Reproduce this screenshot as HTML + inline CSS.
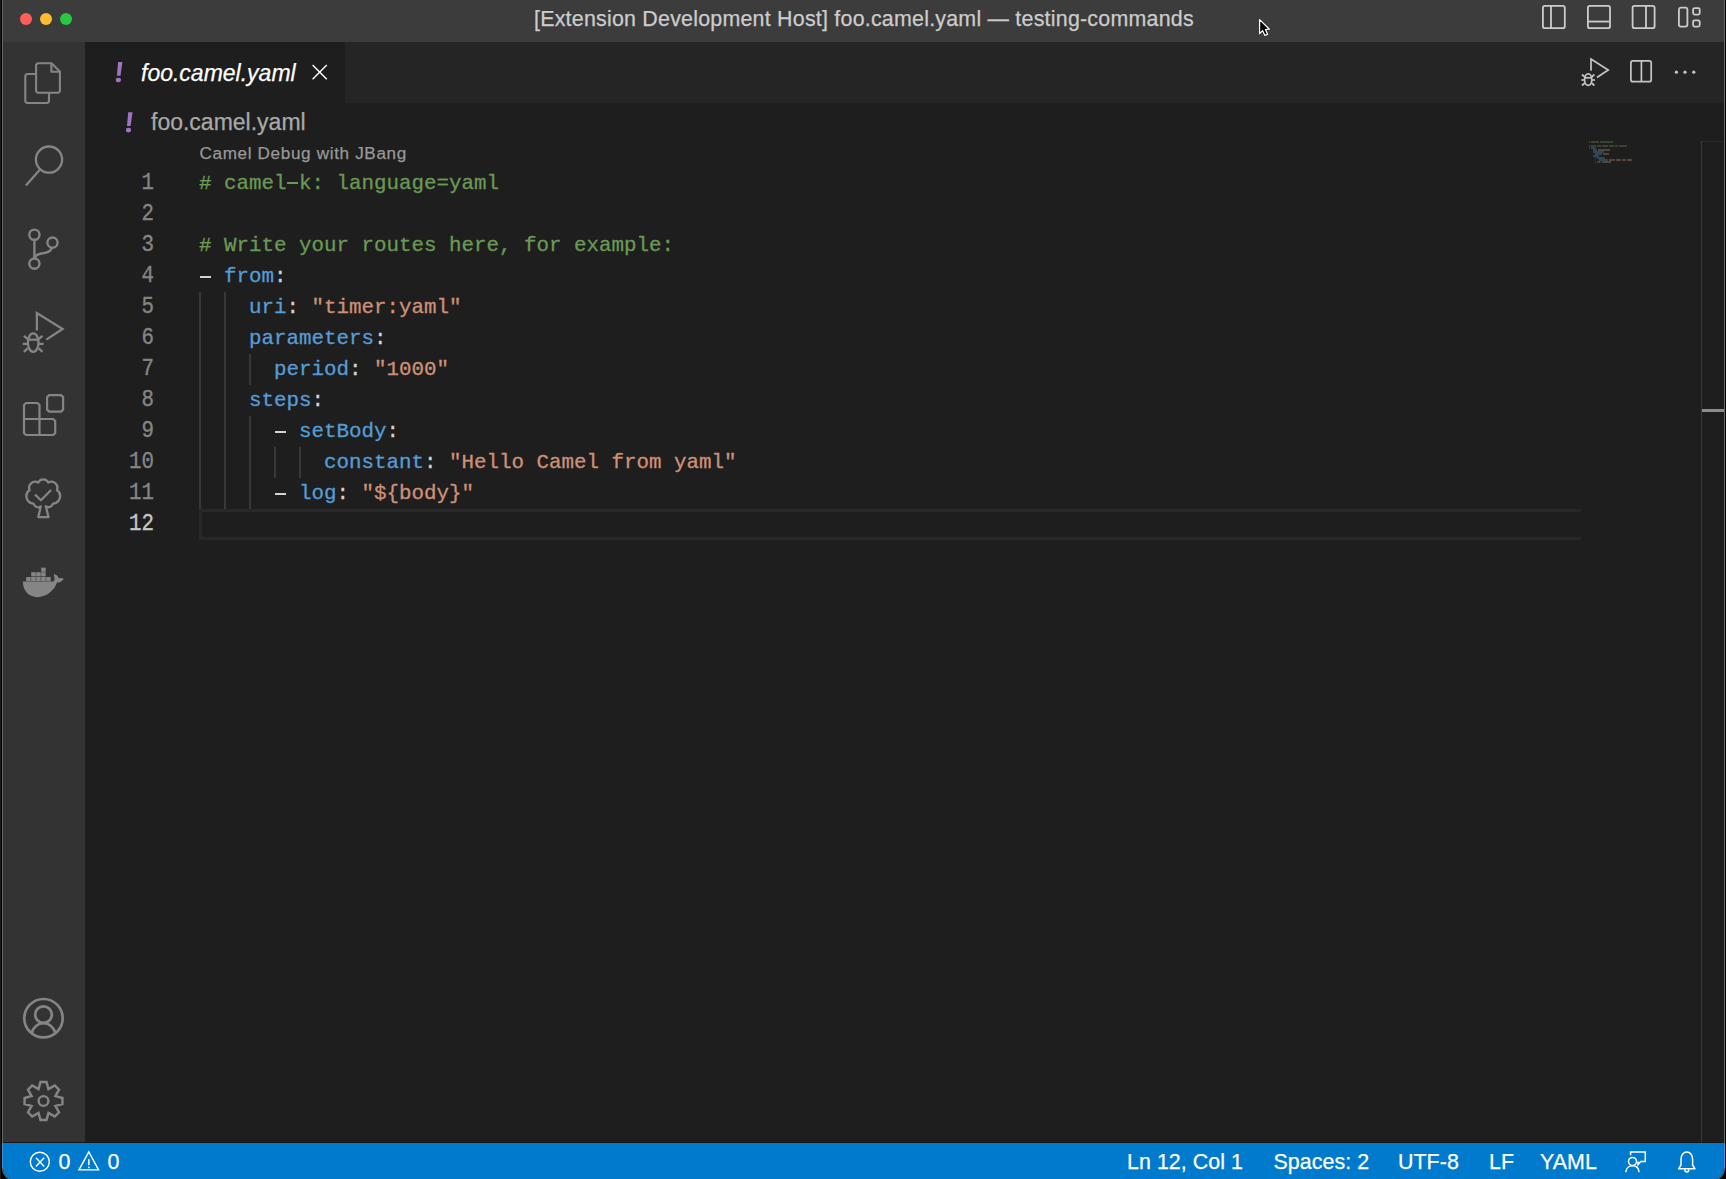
<!DOCTYPE html><html><head><meta charset="utf-8"><style>
html,body{margin:0;padding:0;width:1726px;height:1179px;overflow:hidden;background:#000;}
body{font-family:"Liberation Sans", sans-serif;position:relative;}
.abs{position:absolute;}
#brd{position:absolute;left:2px;top:0;width:1723px;height:1181px;border-radius:0 0 13px 13px;background:#666;}
#win{position:absolute;left:3px;top:0;width:1721px;height:1180px;border-radius:0 0 12px 12px;overflow:hidden;background:#1e1e1e;}
.code{position:absolute;left:199px;-webkit-text-stroke:0.3px currentColor;font-family:"Liberation Mono", monospace;font-size:20.83px;line-height:31px;white-space:pre;color:#d4d4d4;}
.ln{position:absolute;left:100px;width:54px;text-align:right;-webkit-text-stroke:0.3px currentColor;transform:scaleY(1.17);transform-origin:0 21px;font-family:"Liberation Mono", monospace;font-size:20.83px;line-height:31px;color:#858585;}
.c{color:#6a9955}.k{color:#569cd6}.s{color:#ce9178}.p{color:#d4d4d4}
.g{position:absolute;width:2px;background:#383838;}
.d{position:absolute;width:11px;height:2.4px;background:#d4d4d4;}
.mm{position:absolute;height:1.5px;}
</style></head><body>
<div class="abs" style="left:0;top:0;width:1px;height:1179px;background:#1a1a1a"></div>
<div id="brd"></div>
<div id="win">
<div class="abs" style="left:0;top:0;width:1721px;height:42px;background:#3c3c3c;"></div>
<div class="abs" style="left:0;top:42px;width:82px;height:1101px;background:#333333;"></div>
<div class="abs" style="left:82px;top:42px;width:1639px;height:61px;background:#252526;"></div>
<div class="abs" style="left:82px;top:42px;width:260px;height:61px;background:#1e1e1e;"></div>
<div class="abs" style="left:0;top:1143px;width:1721px;height:37px;background:#007acc;"></div>
</div>
<div style="position:absolute;left:534px;top:8.51px;font-size:21.4px;line-height:21.4px;color:#cccccc;letter-spacing:0.23px;font-style:normal;white-space:pre;-webkit-text-stroke:0.25px #cccccc;">[Extension Development Host] foo.camel.yaml — testing-commands</div>
<div class="abs" style="left:19.8px;top:12.8px;width:12.4px;height:12.4px;border-radius:50%;background:#ff5f57;"></div>
<div class="abs" style="left:39.8px;top:12.8px;width:12.4px;height:12.4px;border-radius:50%;background:#febc2e;"></div>
<div class="abs" style="left:59.8px;top:12.8px;width:12.4px;height:12.4px;border-radius:50%;background:#28c840;"></div>
<div style="position:absolute;left:141px;top:61.55px;font-size:23px;line-height:23px;color:#ffffff;letter-spacing:0px;font-style:italic;white-space:pre;-webkit-text-stroke:0.25px #ffffff;">foo.camel.yaml</div>
<div style="position:absolute;left:151px;top:111.45px;font-size:23px;line-height:23px;color:#a9a9a9;letter-spacing:0px;font-style:normal;white-space:pre;-webkit-text-stroke:0.25px #a9a9a9;">foo.camel.yaml</div>
<div style="position:absolute;left:199.5px;top:145.27px;font-size:17.1px;line-height:17.1px;color:#999999;letter-spacing:0.66px;font-style:normal;white-space:pre;-webkit-text-stroke:0.25px #999999;">Camel Debug with JBang</div>
<div class="ln" style="top:168px;color:#858585">1</div>
<div class="d" style="left:287.2px;top:181.5px;width:10.7px;height:2.1px;background:#6a9955"></div>
<div class="code" style="top:168px"><span class="c"># camel</span> <span class="c">k: language=yaml</span></div>
<div class="mm" style="left:1588.70px;top:141.0px;width:1.01px;background:#6a9955;opacity:.32"></div>
<div class="mm" style="left:1590.72px;top:141.0px;width:5.05px;background:#6a9955;opacity:.32"></div>
<div class="mm" style="left:1595.77px;top:141.0px;width:1.01px;background:#6a9955;opacity:.32"></div>
<div class="mm" style="left:1596.78px;top:141.0px;width:2.02px;background:#6a9955;opacity:.32"></div>
<div class="mm" style="left:1599.81px;top:141.0px;width:13.13px;background:#6a9955;opacity:.32"></div>
<div class="ln" style="top:199px;color:#858585">2</div>
<div class="ln" style="top:230px;color:#858585">3</div>
<div class="code" style="top:230px"><span class="c"># Write your routes here, for example:</span></div>
<div class="mm" style="left:1588.70px;top:145.0px;width:1.01px;background:#6a9955;opacity:.32"></div>
<div class="mm" style="left:1590.72px;top:145.0px;width:5.05px;background:#6a9955;opacity:.32"></div>
<div class="mm" style="left:1596.78px;top:145.0px;width:4.04px;background:#6a9955;opacity:.32"></div>
<div class="mm" style="left:1601.83px;top:145.0px;width:6.06px;background:#6a9955;opacity:.32"></div>
<div class="mm" style="left:1608.90px;top:145.0px;width:5.05px;background:#6a9955;opacity:.32"></div>
<div class="mm" style="left:1614.96px;top:145.0px;width:3.03px;background:#6a9955;opacity:.32"></div>
<div class="mm" style="left:1619.00px;top:145.0px;width:8.08px;background:#6a9955;opacity:.32"></div>
<div class="ln" style="top:261px;color:#858585">4</div>
<div class="d" style="left:199.8px;top:275.6px"></div>
<div class="code" style="top:261px">  <span class="k">from</span><span class="p">:</span></div>
<div class="mm" style="left:1588.70px;top:147.0px;width:1.01px;background:#d4d4d4;opacity:.15"></div>
<div class="mm" style="left:1590.72px;top:147.0px;width:4.04px;background:#569cd6;opacity:.32"></div>
<div class="mm" style="left:1594.76px;top:147.0px;width:1.01px;background:#d4d4d4;opacity:.15"></div>
<div class="ln" style="top:292px;color:#858585">5</div>
<div class="code" style="top:292px">    <span class="k">uri</span><span class="p">:</span> <span class="s">"timer:yaml"</span></div>
<div class="mm" style="left:1592.74px;top:149.0px;width:3.03px;background:#569cd6;opacity:.32"></div>
<div class="mm" style="left:1595.77px;top:149.0px;width:1.01px;background:#d4d4d4;opacity:.15"></div>
<div class="mm" style="left:1597.79px;top:149.0px;width:12.12px;background:#ce9178;opacity:.32"></div>
<div class="ln" style="top:323px;color:#858585">6</div>
<div class="code" style="top:323px">    <span class="k">parameters</span><span class="p">:</span></div>
<div class="mm" style="left:1592.74px;top:151.0px;width:10.10px;background:#569cd6;opacity:.32"></div>
<div class="mm" style="left:1602.84px;top:151.0px;width:1.01px;background:#d4d4d4;opacity:.15"></div>
<div class="ln" style="top:354px;color:#858585">7</div>
<div class="code" style="top:354px">      <span class="k">period</span><span class="p">:</span> <span class="s">"1000"</span></div>
<div class="mm" style="left:1594.76px;top:153.0px;width:6.06px;background:#569cd6;opacity:.32"></div>
<div class="mm" style="left:1600.82px;top:153.0px;width:1.01px;background:#d4d4d4;opacity:.15"></div>
<div class="mm" style="left:1602.84px;top:153.0px;width:6.06px;background:#ce9178;opacity:.32"></div>
<div class="ln" style="top:385px;color:#858585">8</div>
<div class="code" style="top:385px">    <span class="k">steps</span><span class="p">:</span></div>
<div class="mm" style="left:1592.74px;top:155.0px;width:5.05px;background:#569cd6;opacity:.32"></div>
<div class="mm" style="left:1597.79px;top:155.0px;width:1.01px;background:#d4d4d4;opacity:.15"></div>
<div class="ln" style="top:416px;color:#858585">9</div>
<div class="d" style="left:274.8px;top:430.6px"></div>
<div class="code" style="top:416px">        <span class="k">setBody</span><span class="p">:</span></div>
<div class="mm" style="left:1594.76px;top:157.0px;width:1.01px;background:#d4d4d4;opacity:.15"></div>
<div class="mm" style="left:1596.78px;top:157.0px;width:7.07px;background:#569cd6;opacity:.32"></div>
<div class="mm" style="left:1603.85px;top:157.0px;width:1.01px;background:#d4d4d4;opacity:.15"></div>
<div class="ln" style="top:447px;color:#858585">10</div>
<div class="code" style="top:447px">          <span class="k">constant</span><span class="p">:</span> <span class="s">"Hello Camel from yaml"</span></div>
<div class="mm" style="left:1598.80px;top:159.0px;width:8.08px;background:#569cd6;opacity:.32"></div>
<div class="mm" style="left:1606.88px;top:159.0px;width:1.01px;background:#d4d4d4;opacity:.15"></div>
<div class="mm" style="left:1608.90px;top:159.0px;width:6.06px;background:#ce9178;opacity:.32"></div>
<div class="mm" style="left:1615.97px;top:159.0px;width:5.05px;background:#ce9178;opacity:.32"></div>
<div class="mm" style="left:1622.03px;top:159.0px;width:4.04px;background:#ce9178;opacity:.32"></div>
<div class="mm" style="left:1627.08px;top:159.0px;width:5.05px;background:#ce9178;opacity:.32"></div>
<div class="ln" style="top:478px;color:#858585">11</div>
<div class="d" style="left:274.8px;top:492.6px"></div>
<div class="code" style="top:478px">        <span class="k">log</span><span class="p">:</span> <span class="s">"${body}"</span></div>
<div class="mm" style="left:1594.76px;top:161.0px;width:1.01px;background:#d4d4d4;opacity:.15"></div>
<div class="mm" style="left:1596.78px;top:161.0px;width:3.03px;background:#569cd6;opacity:.32"></div>
<div class="mm" style="left:1599.81px;top:161.0px;width:1.01px;background:#d4d4d4;opacity:.15"></div>
<div class="mm" style="left:1601.83px;top:161.0px;width:9.09px;background:#ce9178;opacity:.32"></div>
<div class="ln" style="top:509px;color:#c6c6c6">12</div>
<div class="g" style="left:199.0px;top:292px;height:217px"></div>
<div class="g" style="left:224.0px;top:292px;height:217px"></div>
<div class="g" style="left:249.0px;top:354px;height:31px"></div>
<div class="g" style="left:249.0px;top:416px;height:93px"></div>
<div class="g" style="left:274.0px;top:447px;height:31px"></div>
<div class="g" style="left:299.0px;top:447px;height:31px"></div>
<div class="abs" style="left:3px;top:1142px;width:1721px;height:1px;background:#1a1612"></div>
<div class="abs" style="left:2px;top:1143px;width:1px;height:25px;background:#3d94d6"></div>
<div class="abs" style="left:1724px;top:1143px;width:1px;height:25px;background:#3d94d6"></div>
<div class="abs" style="left:1701px;top:141px;width:1px;height:1002px;background:#3a3a3a"></div>
<div class="abs" style="left:1702px;top:141px;width:22px;height:1px;background:#2a2a2a"></div>
<div class="abs" style="left:1702px;top:409px;width:22px;height:3px;background:#8c8c8c"></div>
<div class="abs" style="left:199px;top:509px;width:1382px;height:31px;box-sizing:border-box;border:3px solid #282828;border-right:none;"></div>
<div style="position:absolute;left:1127px;top:1152.21px;font-size:21.4px;line-height:21.4px;color:#ffffff;letter-spacing:0.05px;font-style:normal;white-space:pre;-webkit-text-stroke:0.25px #ffffff;">Ln 12, Col 1</div>
<div style="position:absolute;left:1273.5px;top:1152.21px;font-size:21.4px;line-height:21.4px;color:#ffffff;letter-spacing:0.05px;font-style:normal;white-space:pre;-webkit-text-stroke:0.25px #ffffff;">Spaces: 2</div>
<div style="position:absolute;left:1398px;top:1152.21px;font-size:21.4px;line-height:21.4px;color:#ffffff;letter-spacing:0.05px;font-style:normal;white-space:pre;-webkit-text-stroke:0.25px #ffffff;">UTF-8</div>
<div style="position:absolute;left:1489px;top:1152.21px;font-size:21.4px;line-height:21.4px;color:#ffffff;letter-spacing:0.05px;font-style:normal;white-space:pre;-webkit-text-stroke:0.25px #ffffff;">LF</div>
<div style="position:absolute;left:1540px;top:1152.21px;font-size:21.4px;line-height:21.4px;color:#ffffff;letter-spacing:0.05px;font-style:normal;white-space:pre;-webkit-text-stroke:0.25px #ffffff;">YAML</div>
<div style="position:absolute;left:58.5px;top:1152.21px;font-size:21.4px;line-height:21.4px;color:#ffffff;letter-spacing:0.05px;font-style:normal;white-space:pre;-webkit-text-stroke:0.25px #ffffff;">0</div>
<div style="position:absolute;left:107.5px;top:1152.21px;font-size:21.4px;line-height:21.4px;color:#ffffff;letter-spacing:0.05px;font-style:normal;white-space:pre;-webkit-text-stroke:0.25px #ffffff;">0</div>
<svg class="abs" style="left:0;top:0" width="1726" height="1179" viewBox="0 0 1726 1179"><g fill="none" stroke="#858585" stroke-width="2.1" stroke-linejoin="round"><path d="M37.6 63.2 H51.5 L59.9 71.6 V91.2 L58.4 92.7 H37.6 L36.1 91.2 V64.7 Z"/><path d="M51.4 63.6 V71.7 H59.6"/><path d="M36.1 74 H26.8 L25.3 75.5 V101.5 L26.8 103 H47.5 L49 101.5 V92.9"/></g><g fill="none" stroke="#858585" stroke-width="2.3"><circle cx="49" cy="159.6" r="13.1"/><path d="M25.9 185.4 L39.6 169.9"/></g><g fill="none" stroke="#858585" stroke-width="2.4"><circle cx="34.4" cy="234.7" r="5.1"/><circle cx="52.5" cy="242.6" r="5.1"/><circle cx="34.4" cy="263.6" r="5.1"/><path d="M34.4 239.8 V258.5"/><path d="M51.8 247.7 C50.5 252 47 253 43 253.2 C38.5 253.5 35.5 255.5 34.4 258.3"/></g><g fill="none" stroke="#858585" stroke-width="2.3" stroke-linejoin="miter"><path d="M36.9 330.4 V313 L62.6 329 L46.3 339.6"/><ellipse cx="33.2" cy="342.6" rx="5.3" ry="9.2"/><path d="M27.6 339.7 H38.8"/><path d="M23.9 335.8 L27.8 339"/><path d="M42.5 335.8 L38.6 339"/><path d="M22.8 343.9 H27.6"/><path d="M43.6 343.9 H38.8"/><path d="M23.9 351.9 L27.8 348.2"/><path d="M42.5 351.9 L38.6 348.2"/></g><g fill="none" stroke="#858585" stroke-width="2.2" stroke-linejoin="round"><path d="M26 403 H37.5 L39.5 405 V419 H53.2 L55.2 421 V433 L53.2 435 H26 L24 433 V405 Z"/><path d="M24 419 H39.5 V435"/><path d="M49.1 395.1 H61.1 L63.1 397.1 V409.6 L61.1 411.6 H49.1 L47.1 409.6 V397.1 Z"/></g><g fill="none" stroke="#858585" stroke-width="2.3" stroke-linejoin="round"><path d="M40.8 506.3 A4.6 4.6 0 0 1 33.5 503.6 A7.5 7.5 0 0 1 29.6 490 A6 6 0 0 1 38.2 482.6 A5.6 5.6 0 0 1 48.3 482.6 A6 6 0 0 1 56.9 490 A7.5 7.5 0 0 1 53 503.6 A4.6 4.6 0 0 1 45.8 506.3 L48.5 517.1 H38.3 Z"/><path d="M35 494.5 L40.9 500.3 L51.1 490"/></g><g fill="#858585"><path d="M22.8 581.6 H53.5 C54.5 580.5 55 579 54.2 576.5 C53.5 574.5 53.8 574 54.6 574.3 C57 575 58.5 577 58.8 578.4 C60.5 577.8 62.5 578 63.8 579 C62 581.5 59.5 582.6 57 582.6 C54.5 590 47 597.2 37.5 597.2 C28 597.2 23 590 22.8 581.6 Z"/><rect x="26.2" y="577" width="4.5" height="4.2"/><rect x="31.2" y="577" width="4.5" height="4.2"/><rect x="36.2" y="577" width="4.5" height="4.2"/><rect x="41.2" y="577" width="4.5" height="4.2"/><rect x="46.2" y="577" width="4.5" height="4.2"/><rect x="31.2" y="572.2" width="4.5" height="4.2"/><rect x="36.2" y="572.2" width="4.5" height="4.2"/><rect x="41.2" y="572.2" width="4.5" height="4.2"/><rect x="41.2" y="567.6" width="4.5" height="4.2"/></g><g fill="none" stroke="#858585" stroke-width="2.7"><circle cx="43.5" cy="1018.2" r="19.2"/><circle cx="43.5" cy="1014.6" r="8.3"/><path d="M31.4 1033.8 C33 1027 38 1023.2 43.5 1023.2 C49 1023.2 54 1027 55.6 1033.8"/></g><g fill="none" stroke="#858585" stroke-width="2.4" stroke-linejoin="miter"><path d="M40.50 1082.04 L46.50 1082.04 L48.44 1089.08 L54.79 1085.47 L59.03 1089.71 L55.42 1096.06 L62.46 1098.00 L62.46 1104.00 L55.42 1105.94 L59.03 1112.29 L54.79 1116.53 L48.44 1112.92 L46.50 1119.96 L40.50 1119.96 L38.56 1112.92 L32.21 1116.53 L27.97 1112.29 L31.58 1105.94 L24.54 1104.00 L24.54 1098.00 L31.58 1096.06 L27.97 1089.71 L32.21 1085.47 L38.56 1089.08Z"/><circle cx="43.5" cy="1101" r="4.9"/></g><g fill="none" stroke="#cccccc" stroke-width="1.8"><rect x="1542.9" y="5.9" width="21.9" height="22.3" rx="2"/><path d="M1551 5.9 V28.2"/><rect x="1587.9" y="5.9" width="22.1" height="22.3" rx="2"/><path d="M1587.9 21.55 H1610"/><rect x="1632.6" y="5.9" width="22" height="22.3" rx="2"/><path d="M1646 5.9 V28.2"/><rect x="1678.9" y="7.7" width="8.5" height="18.9" rx="2"/><rect x="1693.1" y="8.1" width="6.6" height="6.5" rx="1.5"/><rect x="1693.1" y="20.3" width="6.6" height="6.3" rx="1.5"/></g><g fill="none" stroke="#c5c5c5" stroke-width="1.7"><path d="M1591 70.7 V59 L1608.2 70 L1596.9 77.5"/><ellipse cx="1588.2" cy="79.6" rx="3.6" ry="5.8"/><path d="M1584.6 77.8 H1591.8"/><path d="M1582 74.5 L1584.8 77"/><path d="M1594.4 74.5 L1591.6 77"/><path d="M1581.4 80 H1584.6"/><path d="M1595 80 H1591.8"/><path d="M1582 85.5 L1584.8 83"/><path d="M1594.4 85.5 L1591.6 83"/><rect x="1630.9" y="60.9" width="20.3" height="20.8" rx="2"/><path d="M1641.4 60.9 V81.7"/></g><g fill="#c5c5c5"><circle cx="1676.4" cy="72.2" r="1.6"/><circle cx="1685" cy="72.2" r="1.6"/><circle cx="1693.8" cy="72.2" r="1.6"/></g><g stroke="#ffffff" stroke-width="1.4"><path d="M312.6 65 L326.8 79.3 M326.8 65 L312.6 79.3"/></g><g fill="none" stroke="#ffffff" stroke-width="1.4"><circle cx="39.8" cy="1161.8" r="9.5"/><path d="M35.9 1157.7 L44.2 1166.4 M44.2 1157.7 L35.9 1166.4"/><path d="M88.8 1151.9 L79 1169.9 H98.6 Z" stroke-linejoin="miter"/></g><g fill="#ffffff"><rect x="88.1" y="1159.2" width="1.5" height="6"/><rect x="88.1" y="1166.6" width="1.5" height="1.6"/></g><g fill="none" stroke="#ffffff" stroke-width="1.5"><circle cx="1632.5" cy="1161.4" r="4"/><path d="M1625.8 1172.3 C1626 1168 1629 1165.8 1632.5 1165.8 C1636 1165.8 1638.8 1168 1639 1172.3"/><path d="M1630.6 1155.3 V1152 H1645.3 V1161.6 H1640.8 L1638 1164.6 V1161.6" stroke-linejoin="miter"/></g><g fill="none" stroke="#ffffff" stroke-width="1.5" stroke-linejoin="round"><path d="M1678.6 1168.8 H1695 L1692.6 1165 V1159.5 C1692.6 1155 1690 1152 1686.8 1152 C1683.6 1152 1681 1155 1681 1159.5 V1165 Z"/><path d="M1684.8 1169.5 C1684.8 1171 1685.6 1172 1686.8 1172 C1688 1172 1688.8 1171 1688.8 1169.5"/></g><g transform="translate(0 0)" fill="#a074c4"><path d="M118.1 62.1 H122.4 L120.5 75.8 H116.9 Z"/><ellipse cx="118.4" cy="80" rx="2.6" ry="2.3"/></g><g transform="translate(10.1 50.1)" fill="#a074c4"><path d="M118.1 62.1 H122.4 L120.5 75.8 H116.9 Z"/><ellipse cx="118.4" cy="80" rx="2.6" ry="2.3"/></g><path d="M1259.6 19.6 L1269.4 29.2 L1265.4 29.5 L1267.6 34.3 L1264.9 35.4 L1262.6 30.6 L1259.6 33.5 Z" fill="#000" stroke="#fff" stroke-width="1.2" stroke-linejoin="round"/></svg>
</body></html>
